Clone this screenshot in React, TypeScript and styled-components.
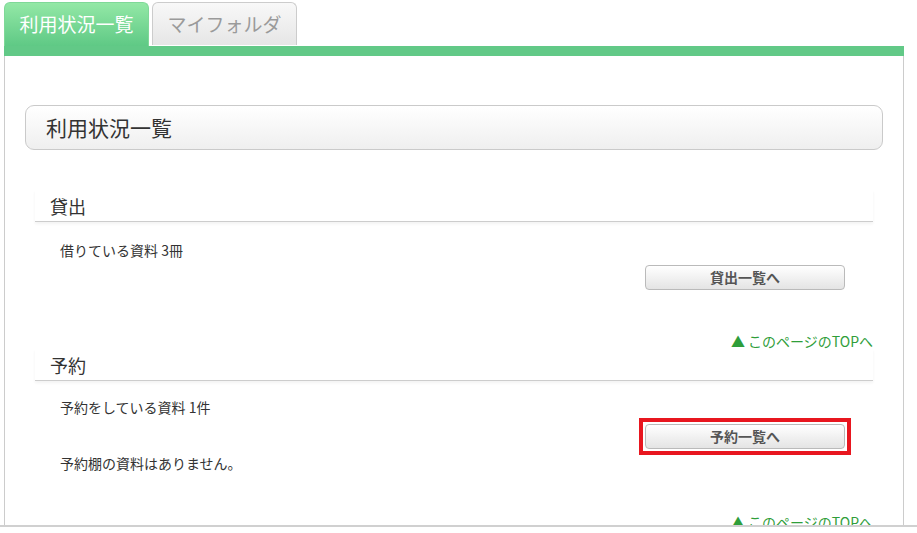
import styled, { createGlobalStyle } from "styled-components"

const GlobalStyle = createGlobalStyle`
  html, body {
    margin: 0;
    padding: 0;
    background: #fff;
  }
  body {
    font-family: "Noto Sans CJK JP", "Noto Sans", sans-serif;
    color: #333;
  }
`

const Frame = styled.div`
  height: 527px;
  overflow: hidden;
  border-bottom: 2px solid #d0d0d0;
  padding: 2px 0 0 4px;
  box-sizing: border-box;
`
const Container = styled.div`
  width: 900px;
`
const TabBar = styled.div`
  display: flex;
  align-items: flex-start;
  gap: 3px;
  height: 44px;
`
const Tab = styled.div<{ $active?: boolean }>`
  width: 145px;
  height: ${p => (p.$active ? "44px" : "43px")};
  box-sizing: border-box;
  border-radius: 6px 6px 0 0;
  display: flex;
  align-items: center;
  justify-content: center;
  font-size: 19px;
  padding-bottom: 2px;
  background: ${p =>
    p.$active
      ? "linear-gradient(#93e8a6, #5fc985)"
      : "linear-gradient(#f8f8f8, #e6e6e6)"};
  border: 1px solid ${p => (p.$active ? "#7fd898" : "#cccccc")};
  border-bottom: none;
  color: ${p => (p.$active ? "#fff" : "#9a9a9a")};
`
const GreenBar = styled.div`
  height: 10px;
  background: #62c987;
`
const Panel = styled.div`
  border-left: 1px solid #cccccc;
  border-right: 1px solid #cccccc;
  padding: 49px 20px 40px 20px;
  min-height: 600px;
`
const PageTitle = styled.div`
  height: 45px;
  box-sizing: border-box;
  border: 1px solid #cacaca;
  border-radius: 9px;
  background: linear-gradient(#ffffff, #efefef);
  display: flex;
  align-items: center;
  padding: 0 0 2px 20px;
  font-size: 21px;
  color: #333;
`
const Section = styled.section<{ $first?: boolean }>`
  margin: ${p => (p.$first ? "40px" : "0")} 10px 0;
`
const SectionHeading = styled.h2`
  margin: 0;
  padding: 4px 15px 3px;
  font-size: 18px;
  line-height: 24px;
  font-weight: normal;
  color: #333;
  border-bottom: 1px solid #cdcdcd;
  box-shadow: 0 2px 3px rgba(0, 0, 0, 0.05);
`
const Body = styled.div<{ $top: number }>`
  margin-top: ${p => p.$top}px;
  padding-left: 25px;
`
const Line = styled.p`
  margin: 0;
  font-size: 14px;
  line-height: 20px;
  color: #333;
`
const ButtonRow = styled.div<{ $top: number; $right: number }>`
  display: flex;
  justify-content: flex-end;
  padding-right: ${p => p.$right}px;
  margin-top: ${p => p.$top}px;
`
const Highlight = styled.div`
  display: flex;
  border: 4px solid #e8161f;
  padding: 2px;
`
const ActionButton = styled.button`
  width: 200px;
  height: 25px;
  box-sizing: border-box;
  border: 1px solid #bababa;
  border-radius: 4px;
  background: linear-gradient(#ffffff, #e4e4e4);
  font-family: inherit;
  font-size: 14px;
  font-weight: bold;
  color: #555;
  padding: 0 0 1px;
`
const TopLink = styled.a<{ $top: number }>`
  display: block;
  text-align: right;
  margin-top: ${p => p.$top}px;
  font-size: 14px;
  line-height: 16px;
  color: #2f9e3a;
  text-decoration: none;
`

const App = () => {
  return (
    <>
      <GlobalStyle />
      <Frame>
        <Container>
          <TabBar>
            <Tab $active>利用状況一覧</Tab>
            <Tab>マイフォルダ</Tab>
          </TabBar>
          <GreenBar />
          <Panel>
            <PageTitle>利用状況一覧</PageTitle>
            <Section $first>
              <SectionHeading>貸出</SectionHeading>
              <Body $top={18}>
                <Line>借りている資料 3冊</Line>
              </Body>
              <ButtonRow $top={5} $right={28}>
                <ActionButton>貸出一覧へ</ActionButton>
              </ButtonRow>
              <TopLink href="#" $top={43}>▲ このページのTOPへ</TopLink>
            </Section>
            <Section>
              <SectionHeading>予約</SectionHeading>
              <Body $top={16}>
                <Line>予約をしている資料 1件</Line>
              </Body>
              <ButtonRow $top={1} $right={22}>
                <Highlight>
                  <ActionButton>予約一覧へ</ActionButton>
                </Highlight>
              </ButtonRow>
              <Body $top={-2}>
                <Line>予約棚の資料はありません。</Line>
              </Body>
              <TopLink href="#" $top={41}>▲ このページのTOPへ</TopLink>
            </Section>
          </Panel>
        </Container>
      </Frame>
    </>
  )
}

export default App
